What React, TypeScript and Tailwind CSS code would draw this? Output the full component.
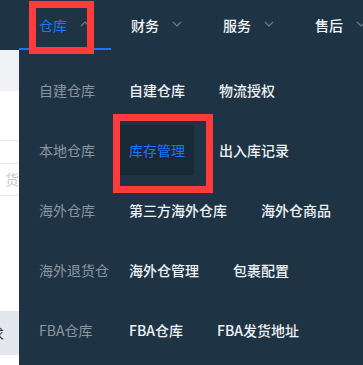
import React from "react";

const tabs = [
  { label: "仓库", active: true },
  { label: "财务" },
  { label: "服务" },
  { label: "售后" },
];

const groups: { title: string; items: string[] }[] = [
  { title: "自建仓库", items: ["自建仓库", "物流授权"] },
  { title: "本地仓库", items: ["库存管理", "出入库记录"] },
  { title: "海外仓库", items: ["第三方海外仓库", "海外仓商品"] },
  { title: "海外退货仓", items: ["海外仓管理", "包裹配置"] },
  { title: "FBA仓库", items: ["FBA仓库", "FBA发货地址"] },
];

function Chevron({ up }: { up?: boolean }) {
  return (
    <svg width="10" height="6" viewBox="0 0 10 6" className="ml-[13px] shrink-0">
      <polyline
        points={up ? "1,5 5,1 9,5" : "1,1 5,5 9,1"}
        fill="none"
        stroke="#6b7b88"
        strokeWidth="1.2"
      />
    </svg>
  );
}

export default function App() {
  return (
    <div className="relative w-[363px] h-[365px] overflow-hidden bg-white font-['Noto_Sans_CJK_SC','Noto_Sans',sans-serif] text-[14px]">
      {/* top nav */}
      <div className="flex h-[50px] bg-[#1e3445] pl-[19px]">
        {tabs.map((t) => (
          <div
            key={t.label}
            className={
              "w-[92px] shrink-0 flex items-center pl-5 border-b-2 " +
              (t.active ? "border-[#1677ff] text-[#1677ff]" : "border-transparent text-[#f2f4f6] font-medium")
            }
          >
            <span className="pt-[2px]">{t.label}</span>
            <Chevron up={t.active} />
          </div>
        ))}
      </div>

      <div className="flex h-[315px]">
        {/* page behind the menu */}
        <div className="w-[19px] shrink-0 flex flex-col text-[14px]">
          <div className="h-[41px] bg-[#eff1f5]" />
          <div className="h-[50px] border-b border-[#e6e8eb]" />
          <div className="h-[23px] border-b border-[#e6e8eb]" />
          <div className="h-[32px] border-b border-[#e6e8eb] flex items-center pl-[5px] text-[#c5c9cf] overflow-hidden whitespace-nowrap">
            货
          </div>
          <div className="h-[115px]" />
          <div className="h-[44px] bg-[#e4e7ee] flex items-center overflow-hidden whitespace-nowrap text-[#333]">
            <span className="-ml-[10px]">求</span>
          </div>
        </div>

        {/* dropdown panel */}
        <div className="flex-1 bg-[#1e3445] pt-[15px] pl-5 flex flex-col gap-[10px]">
          {groups.map((g) => (
            <div key={g.title} className="flex items-center h-[50px]">
              <div className="w-[81px] shrink-0 text-[#8b97a2]">{g.title}</div>
              <div className="flex gap-4">
                {g.items.map((it) => {
                  const active = it === "库存管理";
                  return (
                    <div
                      key={it}
                      className={
                        "h-[50px] px-[9px] flex items-center whitespace-nowrap " +
                        (active ? "bg-[#192a37] text-[#1677ff]" : "text-[#eef1f4] font-medium")
                      }
                    >
                      {it}
                    </div>
                  );
                })}
              </div>
            </div>
          ))}
        </div>
      </div>

      {/* annotation boxes */}
      <div className="absolute left-[29px] top-[1px] w-[65px] h-[53px] border-[7px] border-[#ff3b3b]" />
      <div className="absolute left-[113px] top-[114px] w-[100px] h-[79px] border-[7px] border-[#ff3b3b]" />
    </div>
  );
}
